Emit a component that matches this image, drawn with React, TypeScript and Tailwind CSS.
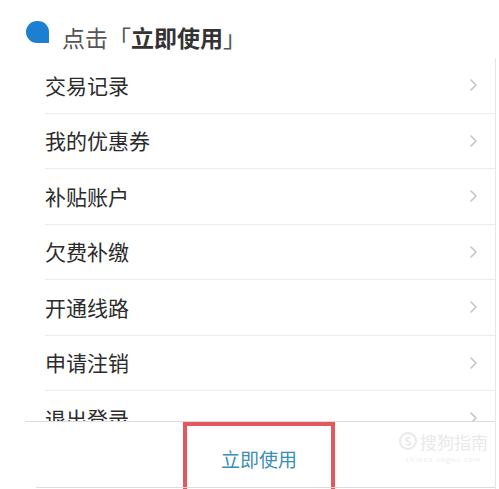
const items = ["交易记录", "我的优惠券", "补贴账户", "欠费补缴", "开通线路", "申请注销", "退出登录"];

function Chevron() {
  return (
    <svg width="9" height="14" viewBox="0 0 9 14" fill="none">
      <path d="M2 2l5 5-5 5" stroke="#c4c4c4" strokeWidth="1.6" strokeLinecap="round" strokeLinejoin="round" />
    </svg>
  );
}

export default function App() {
  return (
    <div className="relative w-[499px] h-[489px] overflow-hidden bg-white font-['Noto_Sans_CJK_SC',sans-serif]">
      {/* step header */}
      <div className="flex h-[58px] items-start pl-[26px] pt-[21px]">
        <span className="mr-[13px] block h-[22px] w-[23px] rounded-full rounded-br-[3px] bg-[#1d7fd1]" />
        <span className="mt-[5px] text-[23px] leading-none text-[#555]">
          点击「<span className="font-bold text-[#333]">立即使用</span>」
        </span>
      </div>

      <div className="w-[496px] border-r border-[#e6e6e6]">
        {/* menu list */}
        <div className="h-[363px] overflow-hidden pl-[45px]">
          {items.map((item) => (
            <div
              key={item}
              className="flex h-[55.5px] items-center justify-between border-b border-[#ececec] pr-[17px]"
            >
              <span className="text-[21px] leading-none text-[#2b2b2b]">{item}</span>
              <Chevron />
            </div>
          ))}
        </div>

        {/* bottom action bar */}
        <div className="ml-[25px] flex h-[68px] justify-center border-t border-[#dcdcdc] pr-[2px]">
          <div className="flex w-[152px] items-center justify-center border-[4px] border-b-0 border-[#e2585e] pt-[1px]">
            <span className="text-[19px] leading-none text-[#3a8db3]">立即使用</span>
          </div>
        </div>
      </div>
      <div className="absolute bottom-[1px] left-[36px] right-[4px] h-px bg-[#dcdcdc]" />

      {/* watermark */}
      <div className="pointer-events-none absolute left-[399px] top-[431px] flex flex-col items-center">
        <div className="flex h-[20px] items-center gap-[3px]">
          <span className="flex h-[18px] w-[18px] items-center justify-center rounded-full border-2 border-[#e9e9e9] text-[11px] font-bold leading-none text-[#e9e9e9]">
            S
          </span>
          <span className="text-[17px] leading-none text-[#e9e9e9]">搜狗指南</span>
        </div>
        <span className="mt-[5px] text-[7px] leading-none tracking-[1px] text-[#eeeeee]">zhinan.sogou.com</span>
      </div>
    </div>
  );
}
